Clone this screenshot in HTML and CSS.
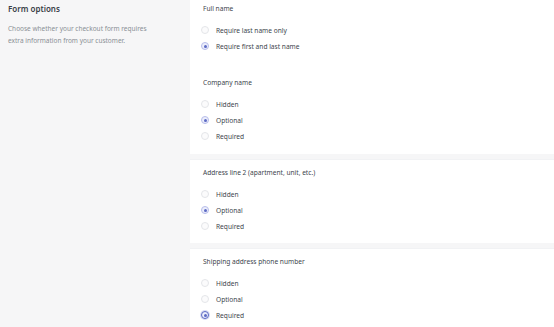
FILE: index.html
```html
<!DOCTYPE html>
<html lang="en">
<head>
  <meta charset="UTF-8" />
  <title>Checkout - Form options</title>
  <link rel="stylesheet" href="styles.css">
</head>
<body>
  <div class="layout">
    <div class="annotation">
      <h2>Form options</h2>
      <p>Choose whether your checkout form requires extra information from your customer.</p>
    </div>

    <div class="cards">
      <section class="card first">
        <div class="group">
          <h3>Full name</h3>
          <label class="radio"><span class="dot"></span>Require last name only</label>
          <label class="radio"><span class="dot on"></span>Require first and last name</label>
        </div>
        <div class="group">
          <h3>Company name</h3>
          <label class="radio"><span class="dot"></span>Hidden</label>
          <label class="radio"><span class="dot on"></span>Optional</label>
          <label class="radio"><span class="dot"></span>Required</label>
        </div>
      </section>

      <section class="card">
        <div class="group">
          <h3>Address line 2 (apartment, unit, etc.)</h3>
          <label class="radio"><span class="dot"></span>Hidden</label>
          <label class="radio"><span class="dot on"></span>Optional</label>
          <label class="radio"><span class="dot"></span>Required</label>
        </div>
      </section>

      <section class="card">
        <div class="group">
          <h3>Shipping address phone number</h3>
          <label class="radio"><span class="dot"></span>Hidden</label>
          <label class="radio"><span class="dot"></span>Optional</label>
          <label class="radio"><span class="dot on focus"></span>Required</label>
        </div>
      </section>
    </div>
  </div>
</body>
</html>
```

FILE: styles.css
```css
* {
  margin: 0; padding: 0; box-sizing: border-box;
}
body {
  background: #f6f6f7;
  font-family: 'Noto Sans', 'Open Sans', sans-serif;
  color: #3d454d;
  overflow: hidden;
}
.layout {
  display: flex;
  align-items: flex-start;
}
.annotation {
  width: 190px;
  padding: 2px 8px 0 8px;
}
.annotation h2 {
  font-size: 8px; font-weight: 600;
  line-height: 14px; color: #3a4047;
}
.annotation p {
  margin-top: 7px;
  max-width: 140px;
  font-size: 6.5px; line-height: 12px;
  color: #8a9096;
}
.cards {
  flex: 1;
  display: flex; flex-direction: column;
  gap: 5px;
}
.card {
  background: #fff;
  border-top: 1px solid #f1f2f4;
  padding: 7px 13px 9px;
}
.card.first {
  border-top: none;
  padding-top: 3px;
  padding-bottom: 10px;
}
.group + .group {
  margin-top: 23px;
}
.group h3 {
  font-size: 6.6px; font-weight: 400;
  line-height: 12px; color: #3d454d;
  margin-bottom: 7px;
}
.radio {
  display: flex; align-items: center;
  height: 16px;
  font-size: 6.6px; color: #3d454d;
}
.dot {
  width: 8px; height: 8px;
  border-radius: 50%;
  border: 1px solid #e4e6e9;
  background: #fbfbfc;
  margin: 0 7px 0 -2px;
  position: relative;
}
.dot.on {
  border-color: #b7bdea;
  background: #eceefb;
}
.dot.on::after {
  content: "";
  position: absolute;
  left: 1.5px; top: 1.5px;
  width: 3px; height: 3px;
  border-radius: 50%;
  background: #5c6ac4;
}
.dot.focus {
  border-color: #5c6ac4;
  box-shadow: 0 0 0 1px #d7dbf3;
}
```
